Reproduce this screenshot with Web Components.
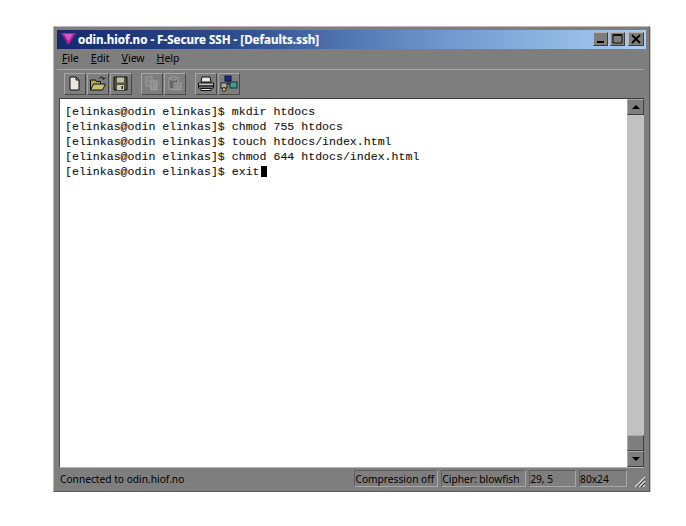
<!DOCTYPE html>
<html>
<head>
<style>
html, body { margin: 0; background: #fff; }
body { padding: 26px 0 0 53px; }
</style>
<script>
const UI_FONT = `"Noto Sans", "Open Sans", "Liberation Sans", sans-serif`;

class SshWindow extends HTMLElement {
  constructor() {
    super();
    this.attachShadow({mode: 'open'}).innerHTML = `
<style>
:host {
  display: flex;
  flex-direction: column;
  box-sizing: border-box;
  width: 597px;
  height: 466px;
  padding: 3px;
  background: #7f7e7f;
  border: 1px solid #5c5c5c;
  border-color: #b9b9b9 #5a5a5a #5a5a5a #b9b9b9;
  box-shadow: 1px 1px 0 #c8c8c8;
  font-family: ${UI_FONT};
}
.main { display: flex; height: 370px; margin: 0 2px 0 2px; border-top: 1px solid #3c3c3c; border-left: 1px solid #4a4a4a; border-bottom: 1px solid #b5b5b5; }
</style>
<slot name="top"></slot>
<div class="main"><slot name="main"></slot></div>
<slot name="bottom"></slot>`;
  }
}
customElements.define('ssh-window', SshWindow);

class SshTitlebar extends HTMLElement {
  constructor() {
    super();
    this.attachShadow({mode: 'open'}).innerHTML = `
<style>
:host {
  display: flex;
  align-items: center;
  height: 19px;
  padding: 0 2px 0 3px;
  background: linear-gradient(90deg, #14296e 0%, #2c4c8e 30%, #6f97cc 65%, #a9cdf2 100%);
  color: #fff;
  font-size: 11.600px;
  font-weight: 700;
  -webkit-text-stroke: .15px #fff;
  white-space: nowrap;
}
svg.logo { width: 18px; height: 15px; margin-right: 0; flex: none; }
span { flex: 1; }
.btn {
  box-sizing: border-box;
  width: 15px; height: 14px; margin-left: 2px;
  display: flex; background: #7f7e7f;
  border: 1px solid; border-color: #b5b5b5 #3f3f3f #3f3f3f #b5b5b5;
}
.btn svg { width: 13px; height: 12px; }
.btn.close { margin-left: 3px; width: 16px; }
.btn.close svg { width: 14px; }
</style>
<svg class="logo" viewBox="0 0 18 15"><path d="M1 1h15L8.500 13z" fill="#b4209a"/><path d="M4 2h9L8.500 9z" fill="#d85ac0"/></svg>
<span><slot></slot></span>
<div class="btn"><svg viewBox="0 0 13 12"><rect x="3" y="8" width="7" height="2" fill="#000"/></svg></div>
<div class="btn"><svg viewBox="0 0 13 12"><path d="M2 1.500h9v8.500h-9z" fill="none" stroke="#111" stroke-width="1"/><rect x="2" y="1" width="9" height="2" fill="#111"/></svg></div>
<div class="btn close"><svg viewBox="0 0 14 12"><path d="M3 2l8 8M11 2l-8 8" stroke="#000" stroke-width="1.800"/></svg></div>`;
  }
}
customElements.define('ssh-titlebar', SshTitlebar);

class SshMenubar extends HTMLElement {
  constructor() {
    super();
    this.attachShadow({mode: 'open'}).innerHTML = `
<style>
:host {
  display: flex;
  align-items: center;
  gap: 12px;
  height: 21px;
  padding: 0 0 1px 5px;
  margin-right: 2px;
  box-sizing: border-box;
  border-bottom: 1px solid #a9a9a9;
  color: #000;
  font-size: 10.500px;
}
</style>
<slot></slot>`;
  }
}
customElements.define('ssh-menubar', SshMenubar);

class SshToolbar extends HTMLElement {
  constructor() {
    super();
    this.attachShadow({mode: 'open'}).innerHTML = `
<style>
:host {
  display: flex;
  height: 28px;
  box-sizing: border-box;
  padding: 3px 0 0 7px;
  gap: 9px;
}
</style>
<slot></slot>`;
  }
}
customElements.define('ssh-toolbar', SshToolbar);

class ToolGroup extends HTMLElement {
  constructor() {
    super();
    this.attachShadow({mode: 'open'}).innerHTML = `
<style>:host { display: flex; gap: 1px; }</style><slot></slot>`;
  }
}
customElements.define('tool-group', ToolGroup);

const ICONS = {
  'new': `<path d="M4 2h6l3 3v10H4z" fill="#e8e8e0" stroke="#111"/><path d="M10 2v3h3" fill="none" stroke="#111"/>`,
  'open': `<path d="M1.500 15V5h5l1 1.500h4V9" fill="#b0a850" stroke="#111"/><path d="M1.500 15l3-6h12l-3 6z" fill="#c8c070" stroke="#111"/><path d="M10 3.500c2-2 4-2 5 .5M15 4l1.500-1.500M15 4l-2 0" fill="none" stroke="#111"/>`,
  'save': `<path d="M2 2h13v13H2z" fill="#55553a" stroke="#111"/><rect x="5" y="2.500" width="7" height="5" fill="#c0c0a8"/><rect x="5" y="10" width="7" height="5" fill="#c8c8b8"/><rect x="9.500" y="11" width="1.500" height="3" fill="#222"/>`,
  'copy': `<g fill="none" stroke="#a3a3a3"><path d="M3 2h6v9H3z"/><path d="M8 6h6v9H8z" fill="#878787"/><path d="M5 5h2M5 7h2M10 9h3M10 11h3M10 13h3"/></g>`,
  'paste': `<g fill="none" stroke="#a0a0a0"><path d="M3 3h9v11H3z" fill="#666"/><path d="M5 2h5v3H5z" fill="#777"/><path d="M8 8h7v7H8z" fill="#878787"/><path d="M10 11h3M10 13h3"/></g>`,
  'print': `<path d="M5 2h8l1 5H4z" fill="#e8e8e8" stroke="#111"/><path d="M1.500 8h15v5h-15z" fill="#c8c8c8" stroke="#111"/><path d="M2 11h14" stroke="#111" stroke-width="1.500"/><path d="M4 13.500h10v2H4z" fill="#eee" stroke="#111"/>`,
  'net': `<rect x="5" y="1" width="6" height="5" fill="#1c2c86" stroke="#0a0f40"/><rect x="10" y="7" width="7" height="6" fill="#3f9a90" stroke="#10302c"/><rect x="1" y="8" width="6" height="5" fill="#b0b0a0" stroke="#222"/><path d="M8 6v3h2M4 13v3" fill="none" stroke="#111"/><circle cx="4" cy="14.500" r="1.800" fill="#d8c850" stroke="#222"/>`
};

class ToolButton extends HTMLElement {
  constructor() {
    super();
    this.attachShadow({mode: 'open'});
  }

  connectedCallback() {
    const icon = ICONS[this.getAttribute('icon')];
    this.shadowRoot.innerHTML = `
<style>
:host {
  box-sizing: border-box;
  display: flex;
  align-items: center;
  justify-content: center;
  width: 22px;
  height: 22px;
  background: #7f7e7f;
  border: 1px solid;
  border-color: #a8a8a8 #484848 #484848 #a8a8a8;
}
svg { width: 18px; height: 17px; }
</style>
<svg viewBox="0 0 18 17">${icon}</svg>`;
  }
}
customElements.define('tool-button', ToolButton);

class SshTerminal extends HTMLElement {
  constructor() {
    super();
    this.attachShadow({mode: 'open'}).innerHTML = `
<style>
:host {
  display: block;
  flex: 1;
  background: #fff;
  padding: 5px 0 0 5px;
  color: #111;
  font: 11.580px/15px "Liberation Mono", "DejaVu Sans Mono", monospace;
  -webkit-text-stroke: .1px #111;
}
</style>
<slot></slot>`;
  }
}
customElements.define('ssh-terminal', SshTerminal);

class TermLine extends HTMLElement {
  constructor() {
    super();
    this.attachShadow({mode: 'open'}).innerHTML = `
<style>
:host { display: flex; align-items: center; height: 15px; white-space: pre; }
.cursor { display: none; width: 6px; height: 11px; background: #000; margin-left: 1px; }
:host([cursor]) .cursor { display: block; }
</style>
<slot></slot><div class="cursor"></div>`;
  }
}
customElements.define('term-line', TermLine);

class SshScrollbar extends HTMLElement {
  constructor() {
    super();
    this.attachShadow({mode: 'open'}).innerHTML = `
<style>
:host {
  display: flex;
  flex-direction: column;
  flex: none;
  width: 17px;
  box-sizing: border-box;
  background: #c1c1c1;
}
.b {
  box-sizing: border-box;
  width: 17px; height: 16px; flex: none;
  display: flex; align-items: center; justify-content: center;
  background: #7f7e7f;
  border: 1px solid; border-color: #a8a8a8 #3f3f3f #3f3f3f #a8a8a8;
}
.track { flex: 1; }
.arrow { width: 0; height: 0; border-left: 4px solid transparent; border-right: 4px solid transparent; }
.up { border-bottom: 4px solid #000; }
.down { border-top: 4px solid #000; }
</style>
<div class="b"><div class="arrow up"></div></div>
<div class="track"></div>
<div class="b"></div>
<div class="b"><div class="arrow down"></div></div>`;
  }
}
customElements.define('ssh-scrollbar', SshScrollbar);

class SshStatusbar extends HTMLElement {
  constructor() {
    super();
    this.attachShadow({mode: 'open'}).innerHTML = `
<style>
:host {
  display: flex;
  align-items: center;
  gap: 3px;
  height: 20px;
  padding: 1px 0 0 2px;
  box-sizing: border-box;
  color: #000;
  font-size: 10.200px;
  white-space: nowrap;
}
svg { flex: none; width: 16px; height: 16px; margin: 2px 0 0 0; }
</style>
<slot></slot>
<svg viewBox="0 0 16 16"><path d="M15 5L5 15M15 9l-6 6M15 13l-2 2" stroke="#d8d8d8" stroke-width="1.200"/><path d="M15 7L7 15M15 11l-4 4" stroke="#3c3c3c" stroke-width="1"/></svg>`;
  }
}
customElements.define('ssh-statusbar', SshStatusbar);

class StatusPanel extends HTMLElement {
  constructor() {
    super();
    this.attachShadow({mode: 'open'}).innerHTML = `
<style>
:host {
  box-sizing: border-box;
  display: flex;
  align-items: center;
  height: 17px;
  overflow: hidden;
  border: 1px solid;
  border-color: #5e5e5e #a8a8a8 #a8a8a8 #5e5e5e;
}
:host([plain]) { border-color: transparent; }
</style>
<slot></slot>`;
  }
}
customElements.define('status-panel', StatusPanel);
</script>
</head>
<body>
<ssh-window>
  <ssh-titlebar slot="top">odin.hiof.no - F-Secure SSH - [Defaults.ssh]</ssh-titlebar>
  <ssh-menubar slot="top">
    <span><u>F</u>ile</span><span><u>E</u>dit</span><span><u>V</u>iew</span><span><u>H</u>elp</span>
  </ssh-menubar>
  <ssh-toolbar slot="top">
    <tool-group><tool-button icon="new"></tool-button><tool-button icon="open"></tool-button><tool-button icon="save"></tool-button></tool-group>
    <tool-group><tool-button icon="copy"></tool-button><tool-button icon="paste"></tool-button></tool-group>
    <tool-group><tool-button icon="print"></tool-button><tool-button icon="net"></tool-button></tool-group>
  </ssh-toolbar>
  <ssh-terminal slot="main">
    <term-line>[elinkas@odin elinkas]$ mkdir htdocs</term-line>
    <term-line>[elinkas@odin elinkas]$ chmod 755 htdocs</term-line>
    <term-line>[elinkas@odin elinkas]$ touch htdocs/index.html</term-line>
    <term-line>[elinkas@odin elinkas]$ chmod 644 htdocs/index.html</term-line>
    <term-line cursor>[elinkas@odin elinkas]$ exit</term-line>
  </ssh-terminal>
  <ssh-scrollbar slot="main"></ssh-scrollbar>
  <ssh-statusbar slot="bottom">
    <status-panel plain style="width:293px">Connected to odin.hiof.no</status-panel>
    <status-panel style="width:84px">Compression off</status-panel>
    <status-panel style="width:85px">Cipher: blowfish</status-panel>
    <status-panel style="width:47px">29, 5</status-panel>
    <status-panel style="width:48px">80x24</status-panel>
  </ssh-statusbar>
</ssh-window>
</body>
</html>
